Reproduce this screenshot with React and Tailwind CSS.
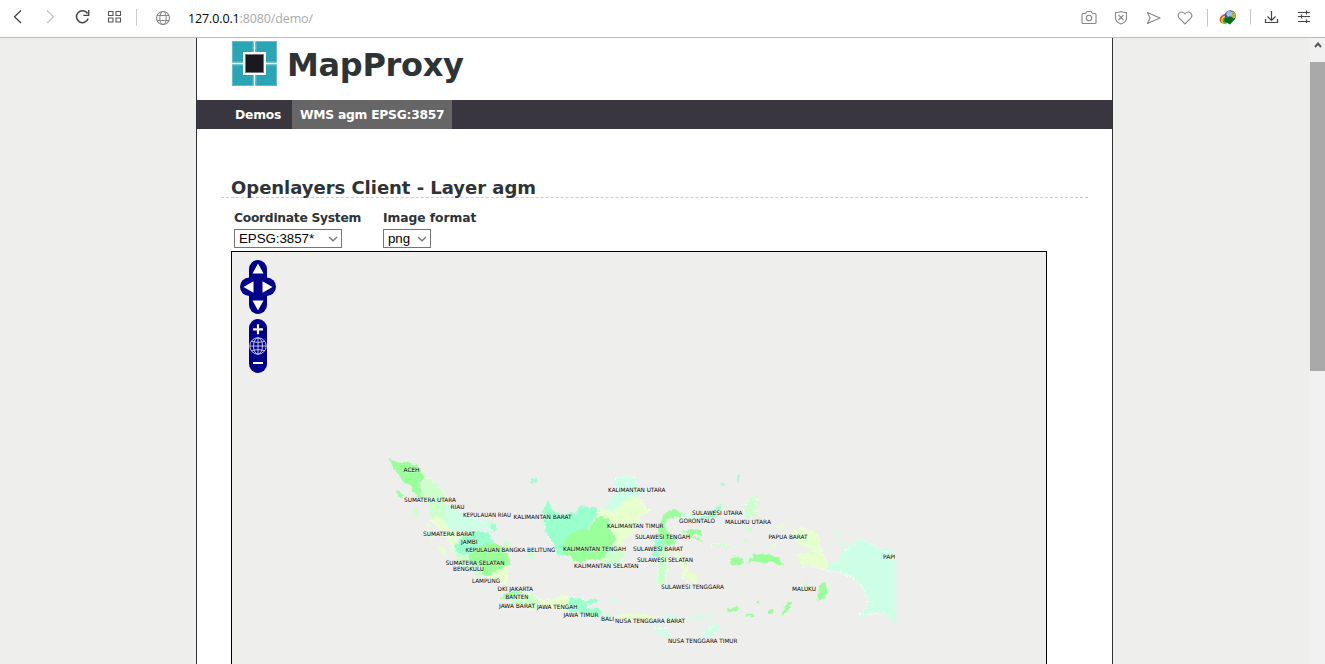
import React from "react";

const G = "#99ff99";
const LG = "#ccffcc";
const AQ = "#99ffcc";
const LA = "#ccffe6";
const Y = "#e6ffcc";

const REGIONS = [
  [G, "389,458 393,461 400,462 410,463 417,466 424,474 422,479 420,484 421,497 418,497 413,491 411,485 404,481 397,473 392,465"],
  [G, "396,491 399,491 403,496 402,498 397,494"],
  [LG, "423,479 427,478 434,482 442,490 445,496 445,504 446,516 443,521 438,517 432,518 429,506 425,500 421,496"],
  [LG, "413,507 416,508 419,515 417,517 413,511"],
  [LA, "445,504 455,507 467,517 477,518 484,524 481,532 472,533 460,531 453,533 447,526 444,519"],
  [LA, "484,519 492,521 493,528 489,526 492,534 486,531"],
  [AQ, "493,523 497,526 494,531 490,528"],
  [Y, "430,519 438,517 444,520 449,528 456,533 457,540 453,549 448,538 438,526"],
  [Y, "427,524 430,523 429,530 434,538 431,539 427,533"],
  [Y, "438,546 442,547 447,557 443,554"],
  [AQ, "455,546 463,536 477,531 489,534 493,543 480,545 473,554 460,554 456,549"],
  [LG, "453,549 459,553 468,558 470,565 481,572 480,577 466,568 458,562"],
  [G, "468,556 475,551 481,546 492,543 502,547 509,556 510,563 505,568 496,571 489,577 481,573 483,567 472,565"],
  [LG, "503,543 507,541 511,545 510,551 505,552"],
  [LG, "528,553 534,553 533,559 527,557"],
  [Y, "487,577 496,571 507,567 508,576 507,584 500,582 491,581"],
  [G, "500,598 507,594 514,591 521,592 521,595 513,597 505,600"],
  [LG, "514,596 521,593 532,594 540,601 537,610 528,607 511,606"],
  [Y, "538,600 550,600 557,597 564,595 570,597 571,605 568,612 557,608 543,607"],
  [AQ, "570,598 579,599 585,601 597,599 596,603 585,604 588,609 600,609 602,618 592,617 577,612 569,611"],
  [LA, "610,600 616,599 619,602 612,602"],
  [LG, "603,615 608,615 611,619 606,620"],
  [Y, "617,616 625,613 634,615 643,614 655,617 649,621 640,618 630,621"],
  [AQ, "543,512 548,501 552,510 561,515 575,513 580,506 592,508 597,508 598,512 594,518 590,527 576,534 568,537 564,546 569,554 558,556 553,541 549,537 545,530"],
  [G, "562,547 568,537 577,531 590,529 596,518 602,516 609,520 608,527 615,533 616,539 612,545 607,558 600,560 589,559 581,562 573,560 571,555 564,554"],
  [LA, "606,507 611,500 616,491 614,481 618,477 629,477 634,476 638,480 637,486 641,494 635,497 625,501 618,510 610,513"],
  [Y, "596,512 601,508 606,510 613,512 620,505 630,497 639,498 643,505 650,511 640,517 637,526 631,534 623,540 620,550 615,546 616,538 611,530 609,520 603,516"],
  [LG, "607,553 613,546 623,552 622,562 614,564 606,565 601,560"],
  [AQ, "531,479 535,478 537,481 534,484 531,482"],
  [G, "661,523 664,515 669,512 674,509 679,512 685,513 681,516 673,517 666,519 665,527 670,537 677,537 674,544 664,546 661,541 657,534"],
  [AQ, "659,532 664,543 663,551 658,557 652,556 653,548 656,541"],
  [LG, "659,552 664,550 669,553 666,560 667,575 663,586 656,582 658,568"],
  [Y, "674,551 684,558 689,567 686,572 693,574 698,576 696,584 690,579 681,577 684,570 679,561"],
  [LA, "679,513 688,515 696,514 706,514 712,519 704,519 691,518"],
  [AQ, "700,517 710,515 717,507 721,504 718,513 712,518"],
  [G, "681,530 689,530 700,531 702,536 695,533 690,538 684,535 690,534"],
  [G, "693,537 699,538 702,542 696,539"],
  [LG, "711,545 718,544 728,544 729,547 719,546"],
  [AQ, "722,482 725,485 722,486"],
  [AQ, "737,477 739,474 738,482 736,480"],
  [LG, "746,505 750,497 758,496 757,503 753,505 758,510 753,511 756,517 750,514 748,520 745,515"],
  [LG, "743,526 751,528 753,533 748,531"],
  [LG, "744,539 748,540 752,544 746,542"],
  [G, "729,561 733,557 740,557 743,561 740,565 733,565"],
  [G, "748,563 750,559 754,558 753,555 758,555 765,554 773,556 779,559 783,565 779,565 772,561 762,562 753,561"],
  [Y, "776,526 782,525 787,528 779,528"],
  [Y, "772,544 777,544 776,547 771,546"],
  [Y, "791,535 795,530 803,528 813,532 819,535 819,544 822,553 829,567 822,569 813,565 807,563 806,568 801,562 796,555 806,553 815,549 807,548 799,544 796,539"],
  [LA, "833,531 838,533 843,538 836,535"],
  [LA, "832,541 840,543 847,543 843,545"],
  [LA, "829,565 838,562 844,551 852,543 860,539 870,543 880,549 897,552 897,625 885,614 875,612 867,616 859,615 866,609 871,603 862,585 852,577 838,571 828,571"],
  [G, "820,585 824,582 827,591 823,599 818,600 818,593"],
  [G, "787,603 792,601 790,608 785,613 782,615 784,609"],
  [G, "727,609 733,608 738,607 737,611 729,612"],
  [G, "746,614 753,614 753,616 746,616"],
  [G, "769,610 772,610 772,613 769,613"],
  [G, "757,601 759,601 759,603 757,603"],
  [LG, "803,587 808,581 808,589 803,593"],
  [LA, "651,628 661,628 670,634 671,638 665,637"],
  [LA, "703,632 709,627 717,624 719,626 714,634 707,637 702,637"],
  [LA, "662,618 670,615 676,617 681,619 673,621"],
  [LA, "689,617 699,616 708,615 719,615 708,617 697,618"],
];

const SPECKS = "M413,507h3m1,8h2m86,-26h1m9,-12h1m24,14h2m-39,44h2m4,6h3m-53,-14h2m8,-2h3m-1,7h2m247,-9h2m-2,-23h2m28,5h2m-6,10h1m64,28h2m-6,8h2m2,2h3m-127,68h2m9,-2h2m8,2h2";

const COASTS = [
  "423,479 430,479 437,485 444,493 446,504 456,508 468,517 478,519 484,525",
  "430,519 438,526 445,537 451,546 461,562 473,573 480,577",
  "508,568 508,576 504,584 493,582",
  "502,598 512,596 522,594 533,595 541,601 550,600 558,597 570,597 580,598 588,601",
  "507,605 520,607 535,610 548,608 560,610 576,613 589,617 601,617",
  "543,512 545,530 550,539 555,551 559,557",
  "615,480 618,477 629,476 637,478 637,486 641,494 642,505 650,511 640,517 637,526 631,534 625,540",
  "575,562 585,562 594,559 602,563 615,566 622,560",
  "658,559 657,576 657,584 664,586 667,575 667,559",
  "681,558 687,568 684,574 682,579 690,581 696,584",
  "746,505 749,499 755,497 758,499 755,504 757,512",
  "795,532 802,528 814,532 819,537 820,545 824,556 830,564",
  "798,555 804,558 801,567 809,566 821,569 829,571 842,573 853,578 862,586 868,600 865,608 859,615 873,614 884,613 893,623",
  "845,551 854,543 861,539 873,545 882,551 894,554",
  "711,545 720,544 730,545",
  "654,628 666,629 673,637",
  "701,636 708,629 719,624",
];

const LABELS = [
  [403.5, 472.3, 16, "ACEH"],
  [404, 502.3, 52, "SUMATERA UTARA"],
  [450.5, 509.3, 14, "RIAU"],
  [463, 517.2, 48, "KEPULAUAN RIAU"],
  [513.5, 519.2, 58, "KALIMANTAN BARAT"],
  [423, 536.2, 52, "SUMATERA BARAT"],
  [461, 544.4, 16.5, "JAMBI"],
  [465.5, 552.3, 90, "KEPULAUAN BANGKA BELITUNG"],
  [445.5, 565.3, 59, "SUMATERA SELATAN"],
  [453, 571.3, 31, "BENGKULU"],
  [472, 583.4, 28, "LAMPUNG"],
  [497.5, 590.8, 35.5, "DKI JAKARTA"],
  [505.5, 598.8, 23, "BANTEN"],
  [499, 608.4, 36, "JAWA BARAT"],
  [537, 609.4, 40.5, "JAWA TENGAH"],
  [563.5, 617.1, 35, "JAWA TIMUR"],
  [601, 620.7, 13, "BALI"],
  [615, 623.3, 70, "NUSA TENGGARA BARAT"],
  [668, 643.1, 69.5, "NUSA TENGGARA TIMUR"],
  [608, 492.3, 57.5, "KALIMANTAN UTARA"],
  [607, 528.2, 56.5, "KALIMANTAN TIMUR"],
  [563, 551.4, 63, "KALIMANTAN TENGAH"],
  [574, 567.6, 64.5, "KALIMANTAN SELATAN"],
  [635, 538.6, 55, "SULAWESI TENGAH"],
  [633, 551.4, 50, "SULAWESI BARAT"],
  [637, 562.3, 56, "SULAWESI SELATAN"],
  [661, 589.3, 63, "SULAWESI TENGGARA"],
  [692, 515.3, 50.5, "SULAWESI UTARA"],
  [679, 523.4, 36, "GORONTALO"],
  [725, 524.1, 46, "MALUKU UTARA"],
  [768.5, 538.6, 39, "PAPUA BARAT"],
  [792, 591.3, 24, "MALUKU"],
  [883, 558.5, 19, "PAPUA"],
];

function IndonesiaMap() {
  return (
    <svg className="block h-full w-full" viewBox="232 252 814 412">
      <clipPath id="tiles"><rect x="232" y="252" width="663" height="412" /></clipPath>
      <filter id="ragged" x="380" y="450" width="530" height="210" filterUnits="userSpaceOnUse" colorInterpolationFilters="sRGB">
        <feTurbulence type="fractalNoise" baseFrequency="0.28" numOctaves="2" seed="4" />
        <feDisplacementMap in="SourceGraphic" scale="5" xChannelSelector="R" yChannelSelector="G" />
      </filter>
      <g clipPath="url(#tiles)">
        <g filter="url(#ragged)">
          {REGIONS.map(([fill, points], i) => (
            <polygon key={i} points={points} fill={fill} stroke={fill} strokeWidth="0.6" />
          ))}
          {COASTS.map((points, i) => (
            <polyline key={i} points={points} fill="none" stroke="#fff" strokeWidth="1" strokeDasharray="1.5 2" />
          ))}
        </g>
        <path d={SPECKS} stroke="#ccffe6" strokeWidth="1.5" fill="none" />
        <g fontFamily="'DejaVu Sans', sans-serif" fontSize="6" fill="#000" stroke="#fff" strokeOpacity="0.4" strokeWidth="0.8" paintOrder="stroke">
          {LABELS.map(([x, y, w, t], i) => (
            <text key={i} x={x} y={y} textLength={w} lengthAdjust="spacingAndGlyphs">{t}</text>
          ))}
        </g>
      </g>
    </svg>
  );
}

function MapControls() {
  return (
    <svg className="absolute left-2 top-2 h-[114px] w-9" viewBox="240 260 36 114">
      <rect x="249" y="260" width="18" height="54" rx="9" fill="#00008b" />
      <rect x="240" y="277.5" width="36" height="18.5" rx="9.2" fill="#00008b" />
      <path d="M258 263.500l5.500 10h-11zM258 310.500l-5.500-10h11zM243.500 287l10-5.700v11.400zM272.500 287l-10-5.700v11.400z" fill="#fff" />
      <rect x="249" y="319" width="18" height="54" rx="9" fill="#00008b" />
      <path d="M253 329.300h10M258 324.300v10M253 363h10" stroke="#fff" strokeWidth="2.200" />
      <g fill="none" stroke="#d5d5ee" strokeWidth="0.900">
        <circle cx="258" cy="346" r="8.200" />
        <ellipse cx="258" cy="346" rx="4.500" ry="8.200" />
        <path d="M258 338v16M250 346h16M251.500 341.500q6.500 1.800 13 0M251.500 350.500q6.500-1.800 13 0" />
      </g>
    </svg>
  );
}

function Logo() {
  return (
    <svg className="block h-[45px] w-[45px]" viewBox="0 0 45 45">
      <rect width="45" height="45" fill="#29a5b6" />
      <path d="M.5.5h44v44H.5z" fill="none" stroke="#61bdc9" />
      <path d="M21 0v45M24 0v45M0 21h45M0 24h45" stroke="#65bdc8" strokeWidth="1" />
      <path d="M22.500 0v45M0 22.500h45" stroke="#fff" strokeWidth="1.400" />
      <rect x="11" y="11" width="23" height="23" fill="#fff" />
      <rect x="13.500" y="13.500" width="18" height="18" fill="#1b191d" stroke="#777" />
    </svg>
  );
}

function BrowserBar() {
  return (
    <header className="h-[38px] w-full shrink-0 border-b border-[#b4bcc8] bg-white">
      <div className="flex h-[37px] items-start">
        <svg className="block h-[37px] w-[188px] shrink-0" viewBox="0 0 188 37" fill="none">
          <path d="M21 10.500l-6.500 6.200 6.500 6.300" stroke="#444" strokeWidth="1.300" />
          <path d="M47 10.500l6.500 6.200-6.500 6.300" stroke="#c4c4c4" strokeWidth="1.300" />
          <path d="M87.600 13.500a6 6 0 1 0 .6 5" stroke="#444" strokeWidth="1.500" />
          <path d="M88.700 10v5.300h-5.300" stroke="#444" strokeWidth="1.300" />
          <path d="M108.500 11.500h4.500v4h-4.500zM116 11.500h4.500v4H116zM108.500 18h4.500v4h-4.500zM116 18h4.500v4H116z" stroke="#555" strokeWidth="1.100" strokeLinejoin="round" />
          <path d="M136.500 9v17" stroke="#ccc" />
          <g stroke="#888" strokeWidth="1.100">
            <circle cx="163" cy="18" r="6.500" />
            <ellipse cx="163" cy="18" rx="3.200" ry="6.500" />
            <path d="M157 15.500h12M157 20.500h12" />
          </g>
        </svg>
        <div className="pt-[10px] font-['Open_Sans',sans-serif] text-[12.5px] leading-[18px] tracking-[-0.13px] text-[#aaa]">
          <span className="text-black">127.0.0.1</span>:8080/demo/
        </div>
        <svg className="ml-auto block h-[37px] w-[260px] shrink-0" viewBox="1065 0 260 37" fill="none">
          <g stroke="#888" strokeWidth="1.100">
            <path d="M1083 13.500h2.500l1.500-2h4l1.500 2h2.500q1 0 1 1v8q0 1-1 1h-12q-1 0-1-1v-8q0-1 1-1z" />
            <circle cx="1089" cy="18" r="2.700" />
            <path d="M1121 11.500q2.500 1.200 5.500 1v5.500q0 4-5.500 6-5.500-2-5.500-6v-5.500q3 .2 5.500-1z" />
            <path d="M1118.500 15l5 5M1123.500 15l-5 5" />
            <path d="M1147.500 12.500l12.500 5.500-12.500 5.500 2.500-5.500z" strokeLinejoin="round" />
            <path d="M1185 24l-5.500-5.500q-2.500-3-.5-5.200 3.200-2.800 6 .7 2.800-3.500 6-.7 2 2.200-.5 5.200z" />
          </g>
          <path d="M1207.500 9v17.500M1250.500 9v15.500" stroke="#c8c8c8" />
          <g transform="rotate(-25 1226 19)">
            <ellipse cx="1225.500" cy="18.500" rx="6" ry="4.600" fill="#e2452a" />
            <ellipse cx="1226" cy="19.200" rx="5.200" ry="3.900" fill="#ffe22b" />
            <ellipse cx="1226.500" cy="20" rx="4.600" ry="3.200" fill="#35b437" />
          </g>
          <circle cx="1230.300" cy="15.800" r="5.600" fill="#2458ae" />
          <circle cx="1229.300" cy="14" r="3" fill="#9fc0ee" />
          <path d="M1231.500 11q4.500 1 4.500 5.500l-2.500 2.500-2.500-3 1.500-2.500z" fill="#b1b72b" />
          <path d="M1224.500 18.500l4-.5 1-2 3.500 2.500h2.500l-5.500 6-6-3.500z" fill="#0a6d18" />
          <path d="M1271.500 11v9M1267.500 16.500l4 4 4-4M1265.500 19v3.500h12V19" stroke="#444" strokeWidth="1.200" />
          <path d="M1298 12.500h12M1298 16.500h12M1298 21.500h12M1306.500 10.500v4M1301.500 14.500v4M1306.500 19.500v3.500" stroke="#444" strokeWidth="1.200" />
        </svg>
      </div>
    </header>
  );
}

function SelectBox({ value, width }) {
  return (
    <button className={`flex h-[19px] items-center justify-between border border-[#767676] bg-white pl-1 pr-[3px] font-['Liberation_Sans',sans-serif] text-[13.33px] font-normal leading-none tracking-[-0.05px] text-black ${width}`}>
      <span>{value}</span>
      <svg className="h-[6px] w-[10px]" viewBox="0 0 10 6" fill="none">
        <path d="M1 1l4 3.800L9 1" stroke="#777" strokeWidth="1.400" />
      </svg>
    </button>
  );
}

export default function App() {
  return (
    <div className="flex h-[664px] w-[1325px] flex-col overflow-hidden bg-[#eeeeec] font-['DejaVu_Sans',sans-serif] text-[#2e3436]">
      <BrowserBar />
      <div className="flex min-h-0 flex-1">
        <main className="ml-[196px] w-[917px] overflow-hidden border-x border-[#2e3436] bg-white">
          <div className="flex h-[62px] items-start gap-[10px] pl-[35px] pt-[3px]">
            <Logo />
            <h1 className="pt-1 text-[32px] font-bold leading-[40px] tracking-[-0.3px]">MapProxy</h1>
          </div>
          <nav className="flex h-[29px] bg-[#3a3640] pl-[30px] text-[12.3px] font-bold leading-[29px] text-white">
            <a className="w-[65px] pl-2 pt-px tracking-[-0.2px]">Demos</a>
            <a className="w-[160px] whitespace-nowrap bg-[#666] pl-2 pt-px tracking-[-0.25px]">WMS agm EPSG:3857</a>
          </nav>
          <div className="px-6 pt-[47px]">
            <h2 className="h-[22px] border-b border-dashed border-[#ccc] pl-[10px] text-[18px] font-bold leading-[23px] tracking-[-0.03px]">Openlayers Client - Layer agm</h2>
            <div className="flex h-[53px] gap-[21px] pl-[13px] pt-[11px] text-[12.3px] font-bold leading-[18px]">
              <div className="w-[128px] whitespace-nowrap">
                <div className="h-5 tracking-[-0.28px]">Coordinate System</div>
                <SelectBox value="EPSG:3857*" width="w-[108px]" />
              </div>
              <div className="whitespace-nowrap">
                <div className="h-5 tracking-[-0.06px]">Image format</div>
                <SelectBox value="png" width="w-12" />
              </div>
            </div>
            <div className="relative ml-[10px] h-[414px] w-[816px] border border-black bg-[#eeeeec]">
              <div className="h-[412px]"><IndonesiaMap /></div>
              <MapControls />
            </div>
          </div>
        </main>
        <aside className="ml-auto h-full w-[15px] bg-[#f1f1f1]">
          <div className="flex h-6 items-start justify-center pt-[3px]">
            <svg className="h-2 w-2" viewBox="0 0 8 8" fill="none"><path d="M1 6l3-3.500L7 6" stroke="#555" strokeWidth="2" /></svg>
          </div>
          <div className="h-[309px] bg-[#a8a8a8]" />
        </aside>
      </div>
    </div>
  );
}
